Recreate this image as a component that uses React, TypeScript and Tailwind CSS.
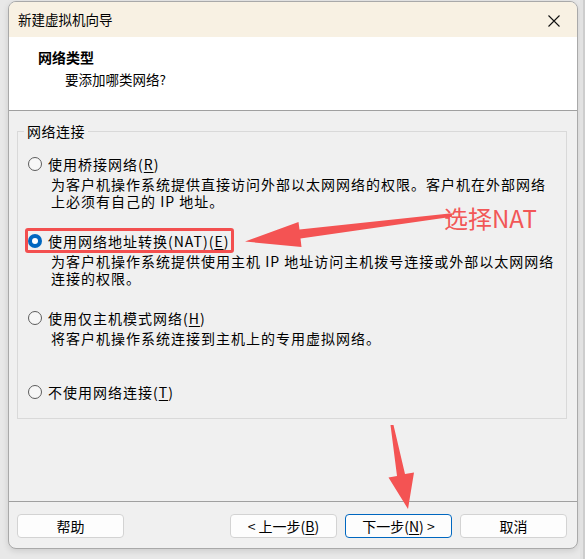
import React from 'react';

const font = '"Noto Sans CJK SC", "Microsoft YaHei", sans-serif';

function Radio({ checked }: { checked?: boolean }) {
  if (checked) {
    return (
      <span className="flex h-[14px] w-[14px] shrink-0 items-center justify-center rounded-full bg-[#0067c0]">
        <span className="h-[6px] w-[6px] rounded-full bg-white" />
      </span>
    );
  }
  return <span className="h-[14px] w-[14px] shrink-0 rounded-full border border-[#5c5c5c] bg-[#f7f7f7]" />;
}

function Key({ k }: { k: string }) {
  return (
    <>
      (<span className="underline underline-offset-2">{k}</span>)
    </>
  );
}

function Option({ label, k, checked, desc, className }: { label: string; k: string; checked?: boolean; desc?: string[]; className?: string }) {
  return (
    <div className={className}>
      <div className="flex h-[20px] items-center gap-[6px]">
        <Radio checked={checked} />
        <span className="tracking-[1px] text-[14px] leading-[20px] text-black">
          {label}
          <Key k={k} />
        </span>
      </div>
      {desc && (
        <div className="mt-[2px] pl-[23px] text-[14px] tracking-[1px] text-black">
          {desc.map((line, i) => (
            <div key={i} className="h-[17px] leading-[17px]">{line}</div>
          ))}
        </div>
      )}
    </div>
  );
}

function Button({ children, primary }: { children: React.ReactNode; primary?: boolean }) {
  return (
    <button
      className={
        'h-[24px] w-[107px] rounded-[4px] border bg-[#fdfdfd] text-[14px] leading-[20px] text-black ' +
        (primary ? 'border-[#0067c0]' : 'border-[#d3d3d3]')
      }
    >
      {children}
    </button>
  );
}

export default function App() {
  return (
    <div className="relative flex h-[559px] w-[585px] overflow-hidden bg-[#e8e8e8]" style={{ fontFamily: font }}>
      <div className="w-[8px] shrink-0" />
      <div className="mt-[1px] flex h-[548px] w-[570px] shrink-0 flex-col overflow-hidden rounded-[8px] border border-[#a9a9a9] bg-[#f0f0f0] shadow-[0_2px_6px_rgba(0,0,0,0.12)]">
        {/* 标题栏 */}
        <div className="flex h-[35px] shrink-0 items-center justify-between bg-[#f8f1e3] pl-[9px] pr-[8px]">
          <span className="text-[13.5px] text-black">新建虚拟机向导</span>
          <svg width="30" height="30" viewBox="0 0 30 30" className="mt-[2px]">
            <path d="M9.5 9.5 L20.5 20.5 M20.5 9.5 L9.5 20.5" stroke="#111" strokeWidth="1.1" />
          </svg>
        </div>
        {/* 头部 */}
        <div className="h-[74px] shrink-0 border-b border-[#a0a0a0] bg-white pt-[10px]">
          <div className="pl-[29px] text-[14px] font-bold leading-[20px] text-black">网络类型</div>
          <div className="mt-[2px] pl-[56px] text-[13.5px] leading-[20px] text-black">要添加哪类网络?</div>
        </div>
        {/* 内容 */}
        <div className="h-[391px] shrink-0 border-b border-[#a0a0a0] pt-[10px]">
          <fieldset className="ml-[8px] mr-[10px] border border-[#d9d9d9] px-[10px] pb-[16px]">
            <legend className="ml-[-4px] px-[3px] text-[14px] leading-[20px] tracking-[0.5px] text-black">网络连接</legend>
            <Option
              className="mt-[13px]"
              label="使用桥接网络"
              k="R"
              desc={['为客户机操作系统提供直接访问外部以太网网络的权限。客户机在外部网络', '上必须有自己的 IP 地址。']}
            />
            <Option
              className="mt-[21px]"
              checked
              label="使用网络地址转换(NAT)"
              k="E"
              desc={['为客户机操作系统提供使用主机 IP 地址访问主机拨号连接或外部以太网网络', '连接的权限。']}
            />
            <Option className="mt-[21px]" label="使用仅主机模式网络" k="H" desc={['将客户机操作系统连接到主机上的专用虚拟网络。']} />
            <Option className="mt-[35px]" label="不使用网络连接" k="T" />
          </fieldset>
        </div>
        {/* 按钮 */}
        <div className="flex flex-1 items-start pl-[8px] pr-[10px] pt-[12px]">
          <Button>帮助</Button>
          <div className="flex-1" />
          <div className="flex gap-[8px]">
            <Button>
              &lt; 上一步
              <Key k="B" />
            </Button>
            <Button primary>
              下一步
              <Key k="N" /> &gt;
            </Button>
            <Button>取消</Button>
          </div>
        </div>
      </div>
      <div className="ml-[2px] w-[3px] shrink-0 bg-[#e2e2e2]" />
      <div className="flex-1 bg-[#cdcdcd]" />

      {/* 标注 */}
      <div className="pointer-events-none absolute left-[25px] top-[228px] h-[25px] w-[209px] rounded-[3px] border-[3px] border-[#f34f4f]" />
      <div className="pointer-events-none absolute left-[444px] top-[202px] text-[24px] leading-[32px] text-[#f25757]">选择NAT</div>
      <svg className="pointer-events-none absolute left-0 top-0" width="585" height="559" viewBox="0 0 585 559">
        <polygon
          points="451.8,213.2 452.2,216.8 300.5,238.5 301.5,247 245,241.5 298.5,222 299.5,229.5"
          fill="#f45353"
        />
        <polygon points="390.5,425 393.5,425 405,474 414,472.5 408,509 388.5,477.5 397,476" fill="#f45353" />
      </svg>
    </div>
  );
}
